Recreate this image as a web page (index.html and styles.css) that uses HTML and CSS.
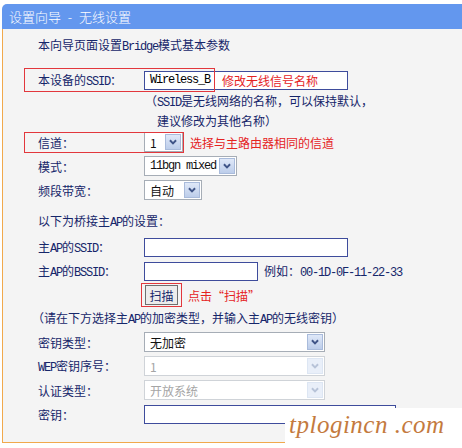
FILE: index.html
```html
<!DOCTYPE html>
<html lang="zh-CN">
<head>
<meta charset="utf-8">
<title>设置向导 - 无线设置</title>
<link rel="stylesheet" href="styles.css">
</head>
<body>
<div class="wizard">
  <div class="title">设置向导 - 无线设置</div>
  <div class="panel">
    <p class="intro">本向导页面设置<span class="m">Bridge</span>模式基本参数</p>

    <div class="row row-ssid">
      <span class="mark mark-ssid"></span>
      <span class="label">本设备的<span class="m">SSID</span>：</span>
      <div class="input input-wide"><span class="m value">Wireless_B</span><span class="hint hint-ssid">修改无线信号名称</span></div>
    </div>
    <div class="note">（<span class="m">SSID</span>是无线网络的名称，可以保持默认，<br>建议修改为其他名称）</div>

    <div class="row row-channel">
      <span class="mark mark-channel"></span>
      <span class="label">信道：</span>
      <div class="select sel-channel"><span>1</span><span class="arrow"><svg viewBox="0 0 16 16" width="16" height="16"><path d="M4.5 6 L8 9.5 L11.5 6" /></svg></span></div>
      <span class="hint">选择与主路由器相同的信道</span>
    </div>
    <div class="row">
      <span class="label">模式：</span>
      <div class="select sel-mode"><span class="m">11bgn mixed</span><span class="arrow"><svg viewBox="0 0 16 16" width="16" height="16"><path d="M4.5 6 L8 9.5 L11.5 6" /></svg></span></div>
    </div>
    <div class="row">
      <span class="label">频段带宽：</span>
      <div class="select sel-bw"><span>自动</span><span class="arrow"><svg viewBox="0 0 16 16" width="16" height="16"><path d="M4.5 6 L8 9.5 L11.5 6" /></svg></span></div>
    </div>

    <p class="heading">以下为桥接主<span class="m">AP</span>的设置：</p>
    <div class="row">
      <span class="label">主<span class="m">AP</span>的<span class="m">SSID</span>：</span>
      <div class="input input-wide"></div>
    </div>
    <div class="row">
      <span class="label">主<span class="m">AP</span>的<span class="m">BSSID</span>：</span>
      <div class="input input-mac"></div>
      <span class="example">例如：<span class="m">00-1D-0F-11-22-33</span></span>
    </div>
    <div class="row">
      <span class="label"></span>
      <span class="mark mark-scan"></span>
      <button class="btn" type="button">扫描</button>
      <span class="hint hint-scan">点击“扫描”</span>
    </div>
    <div class="note2">（请在下方选择主<span class="m">AP</span>的加密类型，并输入主<span class="m">AP</span>的无线密钥）</div>
    <div class="row">
      <span class="label">密钥类型：</span>
      <div class="select sel-long"><span>无加密</span><span class="arrow"><svg viewBox="0 0 16 16" width="16" height="16"><path d="M4.5 6 L8 9.5 L11.5 6" /></svg></span></div>
    </div>
    <div class="row">
      <span class="label"><span class="m">WEP</span>密钥序号：</span>
      <div class="select sel-long disabled"><span>1</span><span class="arrow"><svg viewBox="0 0 16 16" width="16" height="16"><path d="M4.5 6 L8 9.5 L11.5 6" /></svg></span></div>
    </div>
    <div class="row">
      <span class="label">认证类型：</span>
      <div class="select sel-long disabled"><span>开放系统</span><span class="arrow"><svg viewBox="0 0 16 16" width="16" height="16"><path d="M4.5 6 L8 9.5 L11.5 6" /></svg></span></div>
    </div>
    <div class="row">
      <span class="label">密钥：</span>
      <div class="input input-key"></div>
    </div>
  </div>
  <div class="watermark">tplogincn .com</div>
</div>
</body>
</html>
```

FILE: styles.css
```css
* { box-sizing: border-box; }
html, body { margin: 0; padding: 0; background: #ffffff; }
body {
  font-family: "Noto Sans CJK SC", "Noto Sans", sans-serif;
  font-size: 12px;
  color: #16266a;
  width: 462px;
  height: 448px;
  overflow: hidden;
}
.wizard {
  position: relative;
  padding-top: 4px;
  height: 448px;
}
.m {
  font-family: "Liberation Mono", "Noto Sans CJK SC", monospace;
  font-size: 12px;
  letter-spacing: -1.2px;
}
.title {
  margin-left: 2px;
  height: 25px;
  line-height: 25px;
  background: #6397ee;
  border-radius: 5px 0 0 0;
  color: #ffffff;
  font-size: 13px;
  padding-left: 7px;
  font-weight: 300;
  word-spacing: 4px;
}
.panel {
  margin-left: 2px;
  border-left: 1px solid #f1a94c;
  border-bottom: 1px solid #f1a94c;
  background: #f4f4f4;
  padding: 6px 0 16px 35px;
}
.intro {
  margin: 0 0 13px 0;
  height: 20px;
  line-height: 20px;
}
.row {
  position: relative;
  display: flex;
  align-items: center;
  height: 24px;
}
.label {
  width: 106px;
  flex: none;
  white-space: nowrap;
}
.mark {
  position: absolute;
  border: 1px solid #e2373c;
}
.mark-ssid { left: -14px; top: 0; width: 191px; height: 24px; }
.mark-channel { left: -14px; top: 2px; width: 160px; height: 21px; }
.mark-scan { left: 103px; top: 0; width: 41px; height: 24px; }
.row-channel { margin-top: 4px; }
.input {
  height: 19px;
  border: 1px solid #3e4c9c;
  background: #ffffff;
  display: flex;
  align-items: center;
  color: #000;
}
.input-wide { width: 204px; }
.input-mac { width: 114px; }
.input-key { width: 252px; }
.value { padding-left: 5px; width: 77px; flex: none; }
.hint { color: #e5231f; white-space: nowrap; }
.row-channel .hint { margin-left: 7px; }
.note {
  margin-left: 107px;
  padding-left: 12px;
  text-indent: -12px;
  line-height: 17px;
  height: 34px;
}
.select {
  height: 20px;
  border: 1px solid #a6adb6;
  background: #ffffff;
  display: flex;
  align-items: center;
  justify-content: space-between;
  padding-left: 5px;
  padding-right: 1px;
  color: #111;
}
.arrow {
  width: 16px;
  height: 16px;
  border: 1px solid #a9bbdb;
  background: linear-gradient(#dfe8f8, #bccdea);
  display: flex;
  align-items: center;
  justify-content: center;
}
.arrow svg { width: 14px; height: 14px; }
.arrow path { fill: none; stroke: #3f5487; stroke-width: 2.2; }
.sel-channel { width: 39px; }
.sel-mode { width: 93px; }
.sel-bw { width: 58px; }
.sel-long { width: 181px; }
.select.disabled { border-color: #cfd3d8; color: #a5a5a5; }
.select.disabled .arrow { border-color: #dde6f3; background: #e9eff9; }
.select.disabled .arrow path { stroke: #b7c3d8; }
.heading {
  margin: 9px 0 4px 0;
  height: 20px;
  line-height: 20px;
}
.example { margin-left: 6px; white-space: nowrap; }
.btn {
  margin-left: 1px;
  height: 20px;
  width: 33px;
  padding: 0;
  font-family: "Noto Sans CJK SC", sans-serif;
  font-size: 12px;
  color: #16266a;
  border: 1px solid #6f6f6f;
  background: #ececec;
  border-radius: 0;
}
.hint-scan { margin-left: 10px; }
.note2 {
  margin-left: -6px;
  height: 23px;
  line-height: 22px;
  white-space: nowrap;
}
.watermark {
  position: absolute;
  left: 285px;
  top: 408px;
  right: 0;
  bottom: 0;
  background: #ffffff;
  color: #c47a3e;
  font-family: "Liberation Serif", serif;
  font-style: italic;
  font-size: 25px;
  line-height: 34px;
  padding-left: 4px;
  letter-spacing: 0.5px;
  white-space: nowrap;
}
```
